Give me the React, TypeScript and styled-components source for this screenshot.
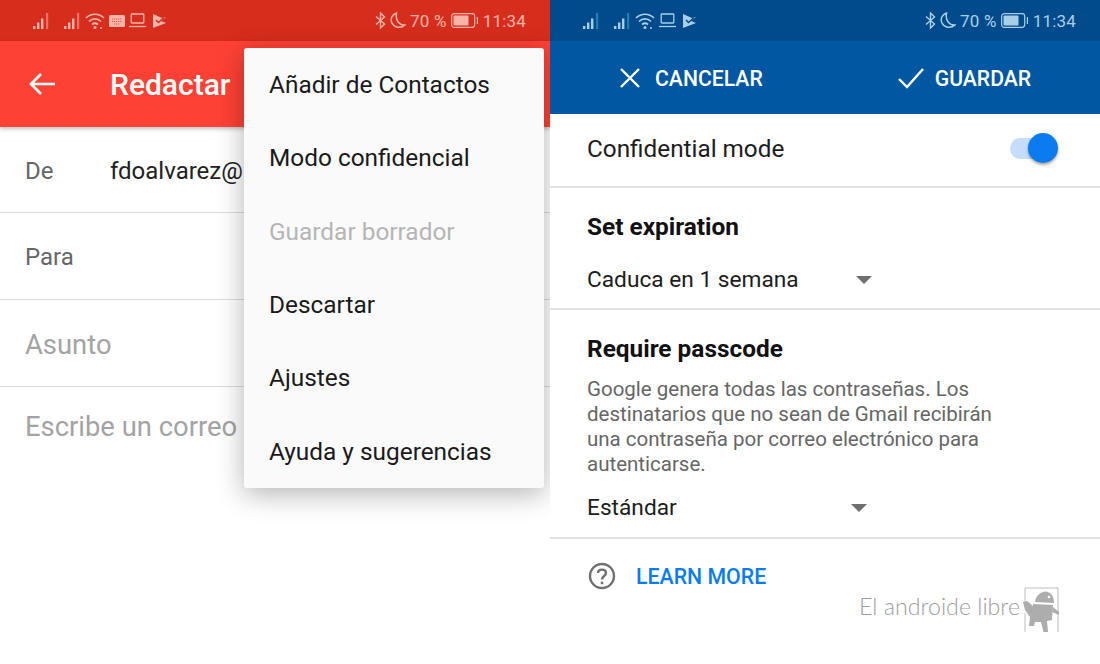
import React from 'react';
import styled, {createGlobalStyle} from 'styled-components';

const GlobalStyle = createGlobalStyle`
    html, body {
        margin: 0;
        padding: 0;
        background: #fff;
    }
    body {
        font-family: Roboto, "Liberation Sans", sans-serif;
    }
`;

const Page = styled.div`
    position: relative;
    display: grid;
    grid-template-columns: 550px 550px;
    width: 1100px;
    height: 664px;
    overflow: hidden;
    background: #fff;
`;

const Panel = styled.div`
    position: relative;
    display: flex;
    flex-direction: column;
    overflow: hidden;
`;

const StatusBar = styled.div<{$bg: string; $fg: string}>`
    display: flex;
    align-items: center;
    justify-content: space-between;
    height: 41px;
    padding: 0 24px 0 33px;
    background: ${p => p.$bg};
    color: ${p => p.$fg};
    flex: none;
`;

const StatusGroup = styled.div`
    display: flex;
    align-items: center;
    gap: 4px;
`;

const SignalGap = styled.span`
    width: 6px;
`;

const StatusText = styled.span<{$ml?: number}>`
    font-size: 17px;
    margin-left: ${p => p.$ml || 0}px;
    letter-spacing: 0.2px;
`;

const ComposeBar = styled.div`
    display: flex;
    align-items: center;
    height: 86px;
    padding-left: 29px;
    background: #fe4135;
    box-shadow: 0 2px 4px rgba(0, 0, 0, 0.25);
    color: #fff;
    flex: none;
`;

const ComposeTitle = styled.span`
    margin: 0 0 0 55px;
    font-size: 30px;
    font-weight: 500;
`;

const FieldRow = styled.div<{$h: number; $pt?: number}>`
    display: flex;
    align-items: center;
    height: ${p => p.$h}px;
    padding: ${p => p.$pt ?? 2}px 0 0 25px;
    border-bottom: 1px solid #dcdcdc;
    box-sizing: border-box;
    flex: none;
`;

const FieldLabel = styled.span`
    width: 85px;
    font-size: 24px;
    color: #666;
`;

const FieldValue = styled.span`
    font-size: 24px;
    color: #222;
`;

const Placeholder = styled.span`
    font-size: 27.4px;
    color: #a3a3a3;
`;

const BodyRow = styled.div`
    padding: 24px 0 0 25px;
`;

const Menu = styled.div`
    position: absolute;
    top: 48px;
    left: 244px;
    width: 300px;
    height: 440px;
    display: flex;
    flex-direction: column;
    background: #fafafa;
    border-radius: 3px;
    box-shadow: 0 6px 28px rgba(0, 0, 0, 0.3);
`;

const MenuItem = styled.div<{$disabled?: boolean}>`
    flex: 1;
    display: flex;
    align-items: center;
    padding-left: 25px;
    font-size: 24.4px;
    color: ${p => (p.$disabled ? '#b5b5b5' : '#1a1a1a')};
`;

const ActionBar = styled.div`
    display: flex;
    align-items: center;
    height: 73px;
    padding-top: 1px;
    box-sizing: border-box;
    background: #0157a1;
    color: #fff;
    flex: none;
`;

const ActionButton = styled.div<{$left: number; $gap: number}>`
    display: flex;
    align-items: center;
    gap: ${p => p.$gap}px;
    margin-left: ${p => p.$left}px;
    font-size: 21.2px;
    font-weight: 500;
`;

const ToggleRow = styled.div`
    display: flex;
    align-items: center;
    justify-content: space-between;
    height: 74px;
    box-sizing: border-box;
    padding: 0 43px 3px 37px;
    border-bottom: 2px solid #e2e2e2;
    flex: none;
`;

const RowLabel = styled.span`
    font-size: 24.3px;
    color: #1c1c1c;
`;

const Toggle = styled.div`
    position: relative;
    width: 47px;
    height: 21px;
    border-radius: 11px;
    background: #c5dcfb;
`;

const Knob = styled.div`
    position: absolute;
    top: -5px;
    right: -1px;
    width: 30px;
    height: 30px;
    border-radius: 50%;
    background: #0a7cf0;
    box-shadow: 0 2px 3px rgba(0, 0, 0, 0.35);
`;

const Section = styled.div<{$h: number}>`
    height: ${p => p.$h}px;
    box-sizing: border-box;
    padding: 25px 37px 0;
    border-bottom: 2px solid #e2e2e2;
    flex: none;
`;

const SectionTitle = styled.div`
    font-size: 24.4px;
    font-weight: 700;
    line-height: 28px;
    color: #111;
`;

const Description = styled.div`
    margin-top: 14px;
    font-size: 20.5px;
    line-height: 25px;
    color: #666;
`;

const Select = styled.div<{$width: number; $top: number}>`
    display: flex;
    align-items: center;
    justify-content: space-between;
    width: ${p => p.$width}px;
    margin-top: ${p => p.$top}px;
    font-size: 22.7px;
    line-height: 28px;
    color: #1c1c1c;
`;

const Caret = styled.div`
    width: 0;
    height: 0;
    border-left: 8px solid transparent;
    border-right: 8px solid transparent;
    border-top: 8px solid #6f6f6f;
`;

const HelpRow = styled.div`
    display: flex;
    align-items: center;
    gap: 20px;
    padding: 23px 0 0 38px;
`;

const LearnMore = styled.span`
    font-size: 21.3px;
    font-weight: 500;
    color: #0a7cf0;
`;

const Watermark = styled.div`
    position: absolute;
    left: 859px;
    top: 587px;
    display: flex;
    align-items: flex-start;
    gap: 3px;
    color: #9e9e9e;
`;

const WatermarkText = styled.span`
    margin-top: 5px;
    font-family: Lato, "Liberation Sans", sans-serif;
    font-size: 23.2px;
    font-weight: 300;
    white-space: nowrap;
`;

const FlagIcon = styled.svg`
    margin-left: 3px;
`;

const Signal = ({dim}: {dim: string}) => (
    <svg width="17" height="18" viewBox="0 0 17 18" fill="currentColor">
        <rect x="0" y="14" width="2.4" height="3" />
        <rect x="4" y="10.5" width="2.4" height="6.5" />
        <rect x="8" y="6.5" width="2.4" height="10.5" />
        <rect x="13" y="1" width="2.2" height="16" fill={dim} />
    </svg>
);

const Wifi = () => (
    <svg width="20" height="18" viewBox="0 0 20 18" fill="none" stroke="currentColor" strokeWidth="1.7">
        <path d="M1 6 C6 1 14 1 19 6" />
        <path d="M4 9.5 C7.5 6 12.5 6 16 9.5" />
        <path d="M7 12.5 C8.8 11 11.2 11 13 12.5" />
        <circle cx="10" cy="15.5" r="1.5" fill="currentColor" stroke="none" />
        <circle cx="16" cy="16" r="1" fill="currentColor" stroke="none" />
    </svg>
);

const Keyboard = ({bg}: {bg: string}) => (
    <svg width="16" height="12" viewBox="0 0 16 12">
        <rect width="16" height="12" rx="1.5" fill="currentColor" />
        <path d="M3 4 H13 M3 6.5 H13 M5 9 H11" stroke={bg} strokeWidth="1" strokeDasharray="1.2 0.8" opacity="0.7" />
    </svg>
);

const Laptop = () => (
    <svg width="17" height="15" viewBox="0 0 17 15" fill="none" stroke="currentColor" strokeWidth="1.3">
        <rect x="2.2" y="1" width="12.6" height="9" rx="0.8" />
        <path d="M0 13.5 H17" />
    </svg>
);

const Flag = ({bg}: {bg: string}) => (
    <FlagIcon width="13" height="14" viewBox="0 0 13 14">
        <path d="M0 0 L9 4 L13 3 L8 7 L13 9 L0 14 Z" fill="currentColor" />
        <path d="M3 6 L5.5 8.5 L11 3.5" fill="none" stroke={bg} strokeWidth="1.4" />
    </FlagIcon>
);

const Bluetooth = () => (
    <svg width="11" height="17" viewBox="0 0 11 17" fill="none" stroke="currentColor" strokeWidth="1.4">
        <path d="M1 4.5 L9.5 12 L5.5 16 V1 L9.5 5 L1 12.5" />
    </svg>
);

const Moon = () => (
    <svg width="16" height="17" viewBox="0 0 16 17" fill="none" stroke="currentColor" strokeWidth="1.5">
        <path d="M6.5 1 C2 2.5 0 7 2 11 C4 15.5 10.5 17 15 13 C10 13.5 5 9 6.5 1 Z" />
    </svg>
);

const Battery = () => (
    <svg width="27" height="15" viewBox="0 0 27 15">
        <rect x="0.7" y="0.7" width="23" height="13.6" rx="2.5" fill="none" stroke="currentColor" strokeWidth="1.2" />
        <rect x="2.5" y="2.5" width="15" height="10" rx="0.8" fill="currentColor" />
        <rect x="25.8" y="4" width="1.2" height="7" fill="currentColor" />
    </svg>
);

const Logo = () => (
    <svg width="37" height="46" viewBox="0 0 37 46">
        <path d="M2 15 V1 H35 V45" fill="none" stroke="#bdbdbd" strokeWidth="1" />
        <path d="M2 26 V45" fill="none" stroke="#bdbdbd" strokeWidth="1" />
        <path d="M12 15 C13 8 18 4.5 23 4.5 C28 5 31 10 31 16 Z" fill="#adadad" />
        <path d="M10 17 L30 18 L29 33 L24 34 L25 45 L20.5 45 L18 35 L12 35 L11 39 L6 39 L7 30 L2 23 L0 15 L4 14 L10 19 Z" fill="#adadad" />
        <path d="M30 20 L36 25 L36 28 L29 25 Z" fill="#adadad" />
        <circle cx="26" cy="10" r="1.3" fill="#fff" />
    </svg>
);

const Status = ({bg, fg, dim, keyboard}: {bg: string; fg: string; dim: string; keyboard?: boolean}) => (
    <StatusBar $bg={bg} $fg={fg}>
        <StatusGroup>
            <Signal dim={dim} />
            <SignalGap />
            <Signal dim={dim} />
            <Wifi />
            {keyboard && <Keyboard bg={bg} />}
            <Laptop />
            <Flag bg={bg} />
        </StatusGroup>
        <StatusGroup>
            <Bluetooth />
            <Moon />
            <StatusText>70 %</StatusText>
            <Battery />
            <StatusText $ml={1}>11:34</StatusText>
        </StatusGroup>
    </StatusBar>
);

const menuItems = ['Añadir de Contactos', 'Modo confidencial', 'Guardar borrador', 'Descartar', 'Ajustes', 'Ayuda y sugerencias'];

export default function App() {
    return (
        <Page>
            <GlobalStyle />
            <Panel>
                <Status bg="#d62d1c" fg="#f9b4a9" dim="#ea7363" keyboard />
                <ComposeBar>
                    <svg width="26" height="24" viewBox="0 0 26 24" fill="none" stroke="#fff" strokeWidth="2.6">
                        <path d="M26 12 H2 M12 2 L2 12 L12 22" />
                    </svg>
                    <ComposeTitle>Redactar</ComposeTitle>
                </ComposeBar>
                <FieldRow $h={86}>
                    <FieldLabel>De</FieldLabel>
                    <FieldValue>fdoalvarez@</FieldValue>
                </FieldRow>
                <FieldRow $h={87}>
                    <FieldLabel>Para</FieldLabel>
                </FieldRow>
                <FieldRow $h={87} $pt={4}>
                    <Placeholder>Asunto</Placeholder>
                </FieldRow>
                <BodyRow>
                    <Placeholder>Escribe un correo</Placeholder>
                </BodyRow>
                <Menu>
                    {menuItems.map(item => (
                        <MenuItem key={item} $disabled={item === 'Guardar borrador'}>
                            {item}
                        </MenuItem>
                    ))}
                </Menu>
            </Panel>
            <Panel>
                <Status bg="#014a8b" fg="#a9cfe6" dim="#1d7fb3" />
                <ActionBar>
                    <ActionButton $left={68} $gap={13}>
                        <svg width="24" height="24" viewBox="0 0 24 24" fill="none" stroke="#fff" strokeWidth="2.4">
                            <path d="M3 3 L21 21 M21 3 L3 21" />
                        </svg>
                        CANCELAR
                    </ActionButton>
                    <ActionButton $left={134} $gap={10}>
                        <svg width="28" height="24" viewBox="0 0 28 24" fill="none" stroke="#fff" strokeWidth="2.4">
                            <path d="M2 13 L10 21 L26 3" />
                        </svg>
                        GUARDAR
                    </ActionButton>
                </ActionBar>
                <ToggleRow>
                    <RowLabel>Confidential mode</RowLabel>
                    <Toggle>
                        <Knob />
                    </Toggle>
                </ToggleRow>
                <Section $h={122}>
                    <SectionTitle>Set expiration</SectionTitle>
                    <Select $width={285} $top={25}>
                        Caduca en 1 semana
                        <Caret />
                    </Select>
                </Section>
                <Section $h={229}>
                    <SectionTitle>Require passcode</SectionTitle>
                    <Description>
                        Google genera todas las contraseñas. Los
                        <br />
                        destinatarios que no sean de Gmail recibirán
                        <br />
                        una contraseña por correo electrónico para
                        <br />
                        autenticarse.
                    </Description>
                    <Select $width={280} $top={17}>
                        Estándar
                        <Caret />
                    </Select>
                </Section>
                <HelpRow>
                    <svg width="28" height="28" viewBox="0 0 28 28" fill="none" stroke="#6f6f6f" strokeWidth="2.4">
                        <circle cx="14" cy="14" r="12" />
                        <path d="M10 11 C10 6.5 18 6.5 18 11 C18 14 14 14 14 17.5" />
                        <circle cx="14" cy="21" r="1.4" fill="#6f6f6f" stroke="none" />
                    </svg>
                    <LearnMore>LEARN MORE</LearnMore>
                </HelpRow>
            </Panel>
            <Watermark>
                <WatermarkText>El androide libre</WatermarkText>
                <Logo />
            </Watermark>
        </Page>
    );
}
